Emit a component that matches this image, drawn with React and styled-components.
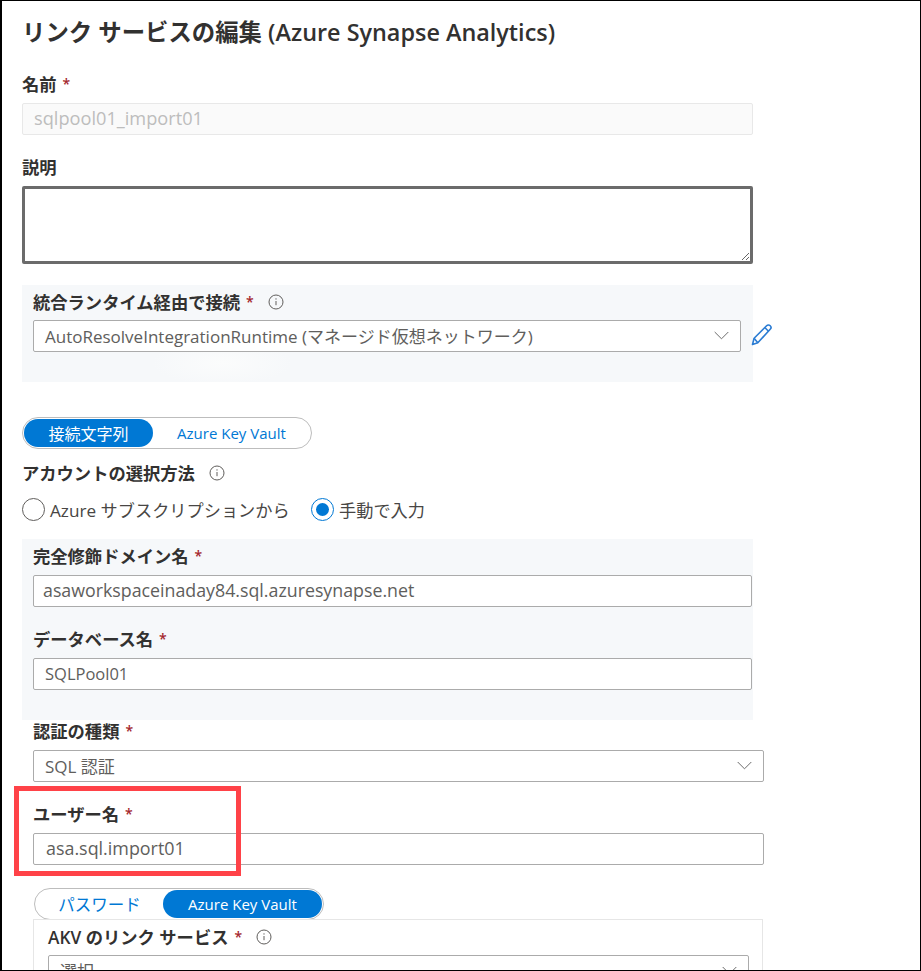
import React from 'react';
import styled, { createGlobalStyle } from 'styled-components';

const GlobalStyle = createGlobalStyle`
    html, body{
        margin: 0;
        padding: 0;
        background: #fff;
    }
    *{
        box-sizing: border-box;
    }
`;

const fontStack = `"Open Sans", "Noto Sans CJK JP", sans-serif`;

const Page = styled.div`
    position: relative;
    width: 921px;
    height: 971px;
    overflow: hidden;
    background: #fff;
    border: 1px solid #000;
    border-left-width: 2px;
    padding: 16px 0 0 20px;
    font-family: ${fontStack};
    color: #323130;
`;

const Title = styled.h1`
    margin: 0 0 28px 0;
    height: 30px;
    line-height: 30px;
    font-size: 23.4px;
    font-weight: 600;
    color: #323130;
    white-space: nowrap;
`;

const Label = styled.div`
    display: flex;
    align-items: center;
    height: 20px;
    margin-bottom: ${p => p.$mb ?? 8}px;
    padding-bottom: 3px;
    font-size: 17.3px;
    font-weight: 600;
    color: #323130;
    white-space: nowrap;
`;

const Star = styled.span`
    color: #a4262c;
    margin-left: 6px;
    font-size: 14px;
    font-weight: 600;
`;

const InfoWrap = styled.span`
    display: inline-flex;
    margin-left: ${p => p.$ml ?? 14}px;
`;

const Field = styled.div`
    display: flex;
    align-items: center;
    justify-content: space-between;
    width: ${p => p.$width}px;
    height: 32px;
    flex: none;
    padding: 0 11px 2px ${p => p.$left ?? 11}px;
    margin-bottom: ${p => p.$mb ?? 0}px;
    background: ${p => (p.$disabled ? '#fafafa' : '#fff')};
    border: ${p => (p.$disabled ? '1.5px solid #e8e8e8' : '1.5px solid #ababab')};
    border-radius: 2px;
    font-size: ${p => p.$size ?? 17}px;
    color: ${p => (p.$disabled ? '#bdbdbd' : '#605e5c')};
    white-space: nowrap;
`;

const Notes = styled.textarea`
    display: block;
    width: 731px;
    height: 78px;
    margin: 0 0 21px 0;
    padding: 4px 8px;
    border: 3px solid #6b6b6b;
    border-radius: 2px;
    background: #fff;
    outline: none;
    resize: both;
    font-family: inherit;
`;

const Panel = styled.section`
    width: 731px;
    height: ${p => p.$height}px;
    padding: 8px 0 0 11px;
    background: ${p => p.$glow
        ? 'radial-gradient(ellipse 70px 22px at 200px 78px, #fbfcfc, #f6f8fa)'
        : '#f6f8fa'};
`;

const SelectRow = styled.div`
    display: flex;
    align-items: center;
    gap: 10px;
`;

const Toggle = styled.div`
    display: flex;
    width: 290px;
    height: ${p => p.$height}px;
    margin: ${p => p.$margin};
    padding: 1px;
    border: 1px solid #bdbdbd;
    border-radius: 17px;
    background: #fff;
`;

const ToggleOption = styled.div`
    display: flex;
    align-items: center;
    justify-content: center;
    flex: ${p => p.$grow};
    border-radius: 15px;
    background: ${p => (p.$active ? '#0078d4' : 'transparent')};
    color: ${p => (p.$active ? '#fff' : '#0078d4')};
    font-size: ${p => p.$size ?? 15}px;
    white-space: nowrap;
`;

const RadioRow = styled.div`
    display: flex;
    align-items: center;
    height: 23px;
    margin: 0 0 18px 0;
    font-size: 17.2px;
    color: #484644;
`;

const Radio = styled.span`
    display: flex;
    align-items: center;
    justify-content: center;
    width: 23px;
    height: 23px;
    margin-right: 5px;
    flex: none;
    border-radius: 50%;
    border: 1.5px solid ${p => (p.$checked ? '#0078d4' : '#605e5c')};
    &::after{
        content: "";
        display: ${p => (p.$checked ? 'block' : 'none')};
        width: 13px;
        height: 13px;
        border-radius: 50%;
        background: #0078d4;
    }
`;

const RadioText = styled.span`
    width: ${p => p.$width}px;
`;

const Indented = styled.div`
    padding-left: 11px;
    margin-top: 2px;
`;

const VaultBox = styled.div`
    width: 730px;
    margin-left: 11px;
    margin-top: -1px;
    padding: 8px 14px 0 14px;
    border: 1.5px solid #e6e6e6;
    background: #fff;
    height: 90px;
`;

const Highlight = styled.div`
    position: absolute;
    left: 12px;
    top: 785px;
    width: 227px;
    height: 90px;
    border: 5px solid #ff4248;
    pointer-events: none;
`;

const PencilSvg = styled.svg`
    flex: none;
    margin-bottom: 3px;
`;

const InfoIcon = () => (
    <svg width="16" height="16" viewBox="0 0 16 16" fill="none" stroke="#605e5c" strokeWidth="1">
        <circle cx="8" cy="8" r="7" />
        <path d="M8 7v4.2" />
        <circle cx="8" cy="4.9" r=".7" fill="#605e5c" stroke="none" />
    </svg>
);

const Chevron = () => (
    <svg width="15" height="9" viewBox="0 0 15 9" fill="none" stroke="#6b6b6b" strokeWidth="1">
        <path d="M.7 1l6.8 6.8L14.3 1" />
    </svg>
);

const Pencil = () => (
    <PencilSvg width="22" height="23" viewBox="0 0 22 23" fill="none" stroke="#2b7cd3" strokeWidth="1.6" strokeLinejoin="round">
        <path d="M1.5 21.5l1.6-6.2L15.6 2.7c1-1 2.6-1 3.6 0s1 2.6 0 3.6L6.8 19.8z" />
        <path d="M13.8 4.5l3.7 3.7M3.1 15.3l3.7 4.5" />
    </PencilSvg>
);

function App() {
    return (
        <Page>
            <GlobalStyle />
            <Title>リンク サービスの編集 (Azure Synapse Analytics)</Title>

            <Label>名前<Star>*</Star></Label>
            <Field $width={731} $disabled $mb={23} $size={18.2}>sqlpool01_import01</Field>

            <Label>説明</Label>
            <Notes />

            <Panel $height={97} $glow>
                <Label $mb={7}>統合ランタイム経由で接続<Star>*</Star><InfoWrap><InfoIcon /></InfoWrap></Label>
                <SelectRow>
                    <Field $width={708}>
                        AutoResolveIntegrationRuntime (マネージド仮想ネットワーク)
                        <Chevron />
                    </Field>
                    <Pencil />
                </SelectRow>
            </Panel>

            <Toggle $height={32} $margin="35px 0 15px 0">
                <ToggleOption $active $grow="0 0 129px" $size={16}>接続文字列</ToggleOption>
                <ToggleOption $grow="1">Azure Key Vault</ToggleOption>
            </Toggle>

            <Label $mb={14}>アカウントの選択方法<InfoWrap><InfoIcon /></InfoWrap></Label>
            <RadioRow>
                <Radio />
                <RadioText $width={261}>Azure サブスクリプションから</RadioText>
                <Radio $checked />
                <RadioText>手動で入力</RadioText>
            </RadioRow>

            <Panel $height={181}>
                <Label>完全修飾ドメイン名<Star>*</Star></Label>
                <Field $width={719} $mb={23} $size={17.8} $left={9}>asaworkspaceinaday84.sql.azuresynapse.net</Field>
                <Label>データベース名<Star>*</Star></Label>
                <Field $width={719} $size={16.5}>SQLPool01</Field>
            </Panel>

            <Indented>
                <Label>認証の種類<Star>*</Star></Label>
                <Field $width={731} $mb={23}>SQL 認証<Chevron /></Field>
                <Label>ユーザー名<Star>*</Star></Label>
                <Field $width={731} $size={17.9} $left={12}>asa.sql.import01</Field>
            </Indented>

            <Toggle $height={32} $margin="23px 0 0 12px">
                <ToggleOption $grow="0 0 127px" $size={16.5}>パスワード</ToggleOption>
                <ToggleOption $active $grow="1">Azure Key Vault</ToggleOption>
            </Toggle>
            <VaultBox>
                <Label $mb={7}>AKV のリンク サービス<Star>*</Star><InfoWrap><InfoIcon /></InfoWrap></Label>
                <Field $width={701}>選択<Chevron /></Field>
            </VaultBox>

            <Highlight />
        </Page>
    );
}

export default App;
